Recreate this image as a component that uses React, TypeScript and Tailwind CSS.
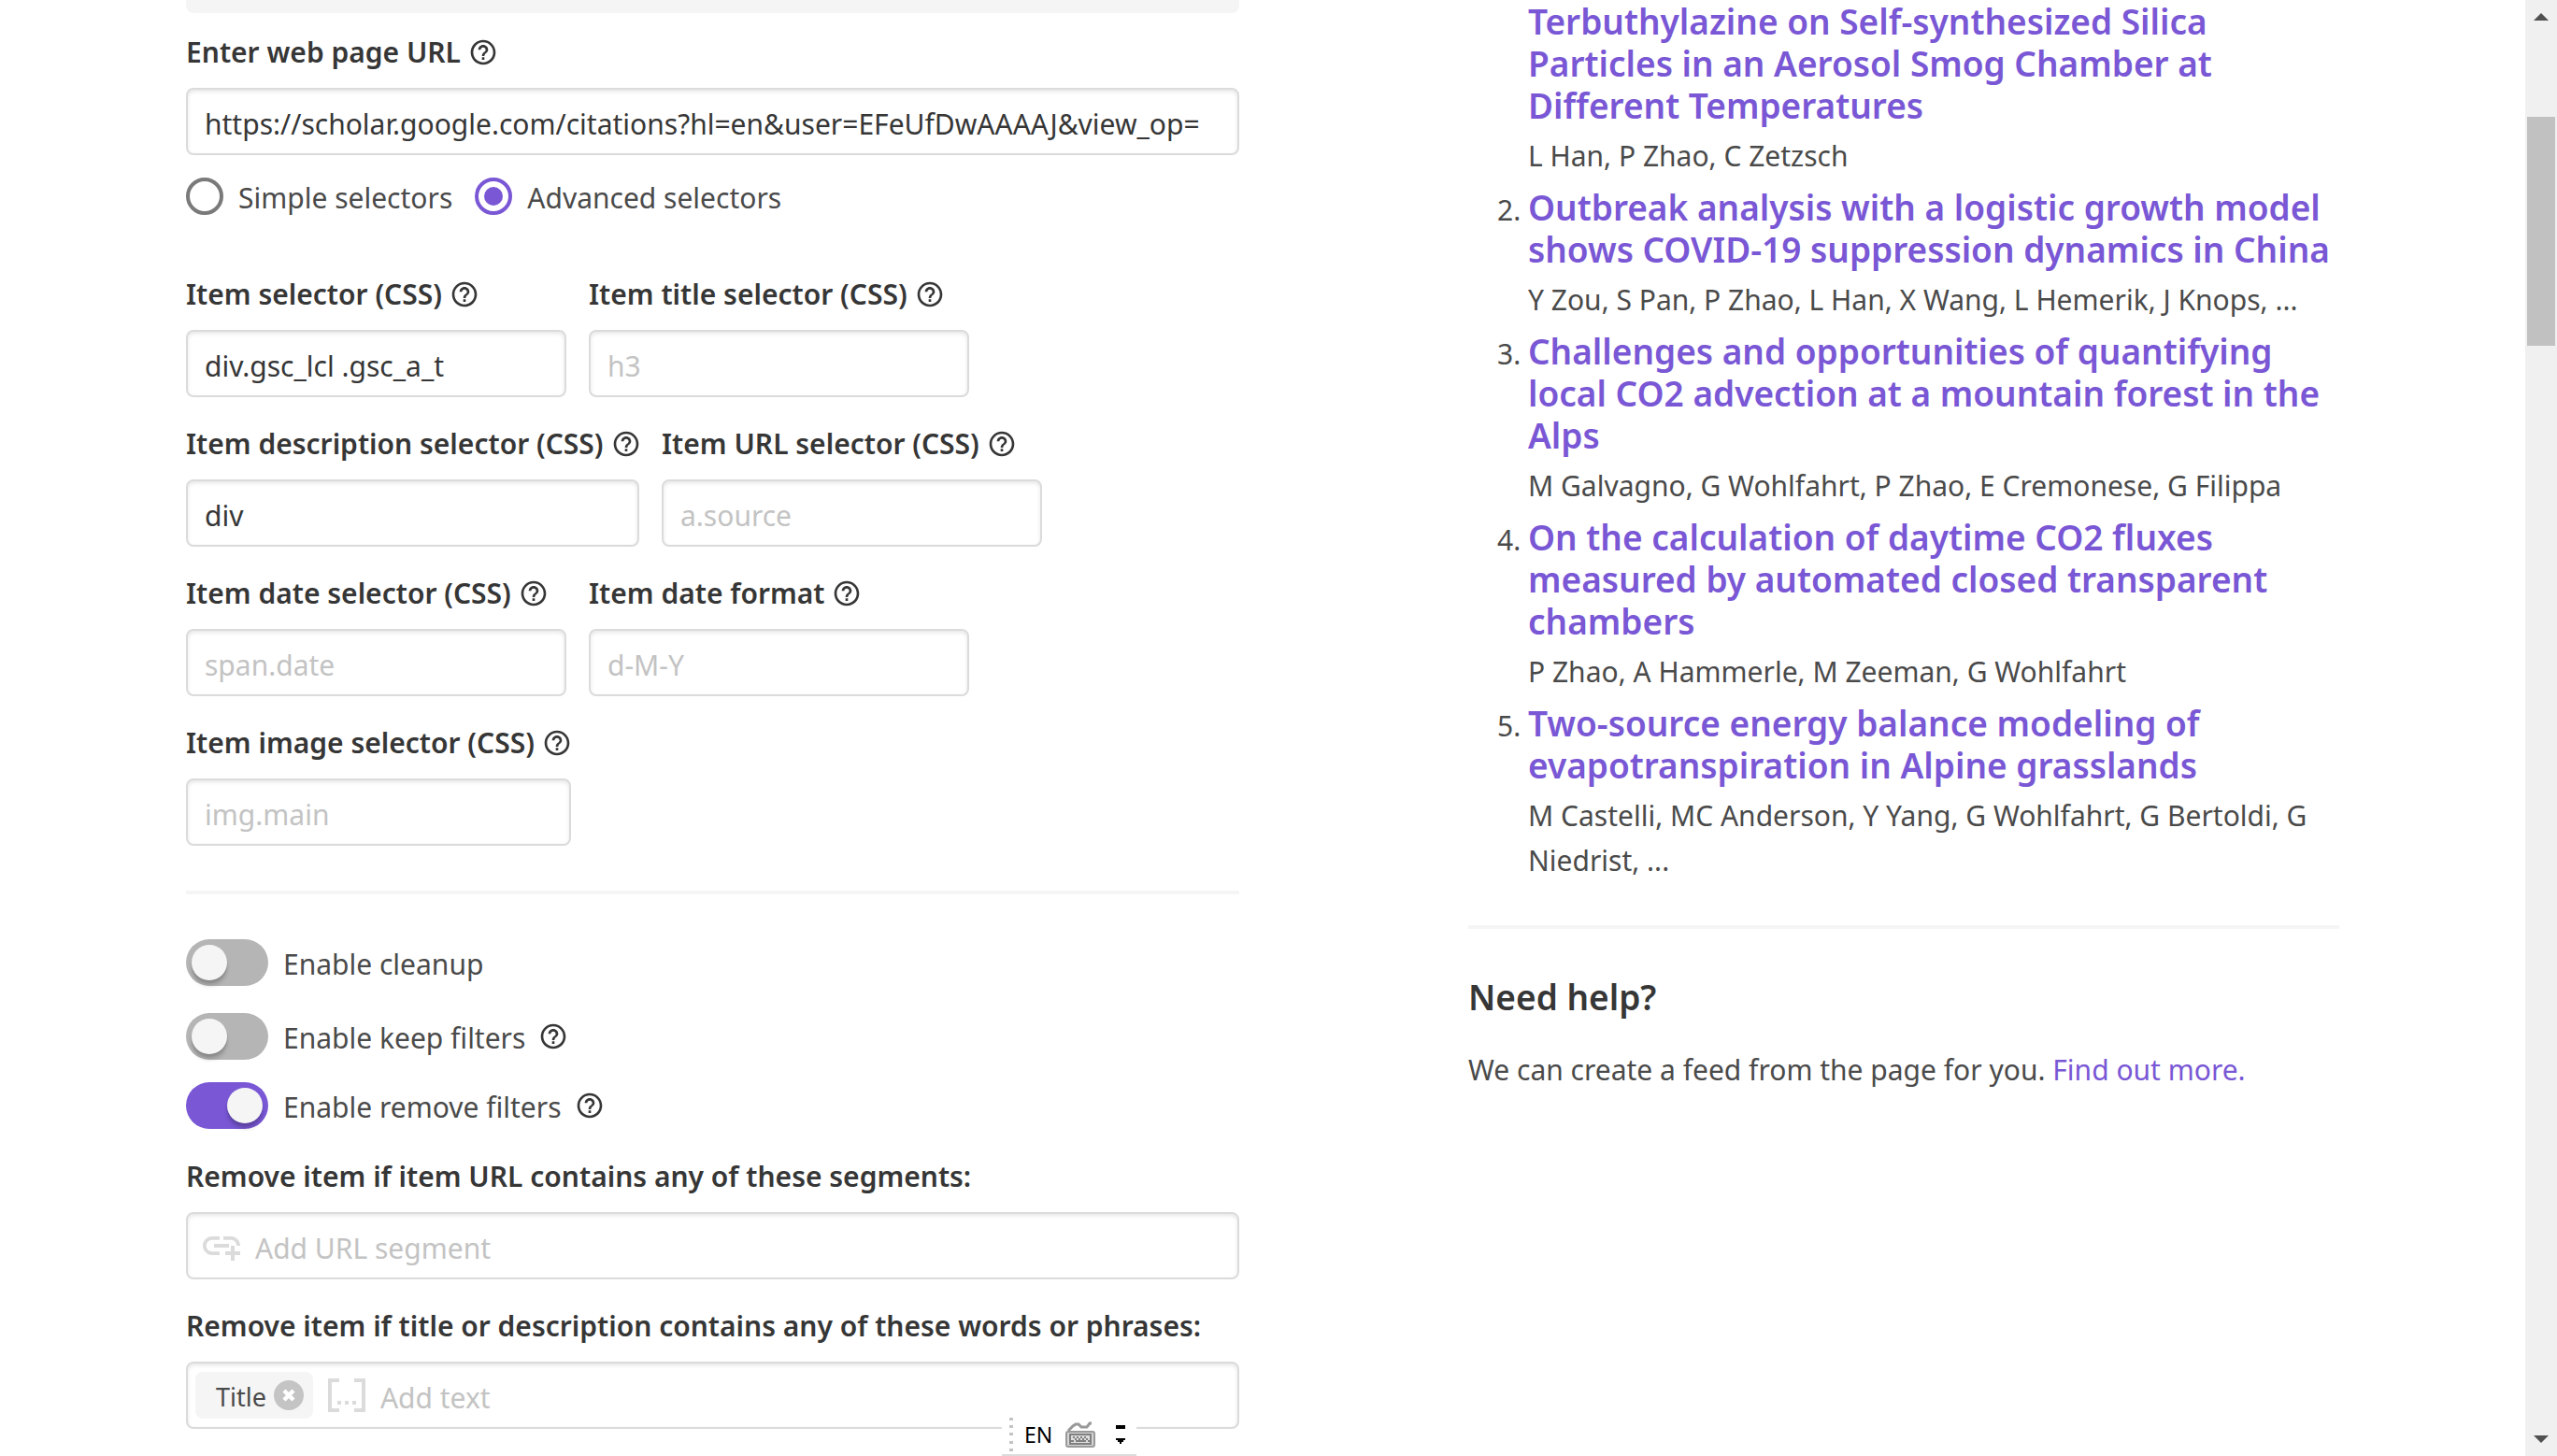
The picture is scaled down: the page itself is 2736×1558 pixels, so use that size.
import React, { useId } from "react";
import { MdHelpOutline } from "react-icons/md";

function Help({ about }: { about: string }) {
  return (
    <button type="button" aria-label={`Help: ${about}`} className="shrink-0 text-[#363636]">
      <MdHelpOutline className="size-8" />
    </button>
  );
}

const inputBox =
  "h-[72px] w-full rounded-lg border-2 border-[#dbdbdb] bg-white shadow-[inset_0_2px_4px_rgba(10,10,10,0.1)]";

type FieldProps = {
  label: string;
  value?: string;
  placeholder?: string;
  width?: string;
};

function Field({ label, value, placeholder, width = "w-full" }: FieldProps) {
  const id = useId();
  return (
    <div className={`flex flex-col gap-4 ${width}`}>
      <div className="flex h-11 items-center gap-2 whitespace-nowrap font-semibold text-[#363636]">
        <label htmlFor={id}>{label}</label>
        <Help about={label} />
      </div>
      <input
        id={id}
        type="text"
        defaultValue={value}
        placeholder={placeholder}
        className={`${inputBox} px-[18px] pt-1 text-[#363636] placeholder:text-[#c3c3c3]`}
      />
    </div>
  );
}

function Radio({ label, checked }: { label: string; checked?: boolean }) {
  return (
    <label className="flex items-center gap-4">
      <input
        type="radio"
        name="mode"
        defaultChecked={checked}
        className="flex size-10 appearance-none items-center justify-center rounded-full border-4 border-[#7a7a7a] before:size-5 before:rounded-full checked:border-[#7957d5] checked:before:bg-[#7957d5]"
      />
      <span className="pt-1">{label}</span>
    </label>
  );
}

function Switch({ label, checked, help }: { label: string; checked?: boolean; help?: boolean }) {
  return (
    <div className="flex h-[50px] items-center gap-3.5">
      <label className="flex items-center gap-4">
        <input
          type="checkbox"
          role="switch"
          defaultChecked={checked}
          className="flex h-[50px] w-[88px] appearance-none items-center rounded-full bg-[#b5b5b5] px-1.5 before:size-[38px] before:rounded-full before:bg-[#f5f5f5] before:shadow-[0_6px_4px_rgba(0,0,0,0.15),0_3px_2px_rgba(0,0,0,0.1)] checked:justify-end checked:bg-[#7957d5]"
        />
        <span className="pt-1">{label}</span>
      </label>
      {help && <Help about={label} />}
    </div>
  );
}

function AddLinkIcon() {
  return (
    <svg viewBox="0 0 24 24" className="mx-1 size-12 shrink-0 fill-[#dbdbdb]" aria-hidden="true">
      <path d="M8 11h8v2H8zM20.1 12H22c0-2.76-2.24-5-5-5h-4v1.9h4c1.71 0 3.1 1.39 3.1 3.1zM3.9 12c0-1.71 1.39-3.1 3.1-3.1h4V7H7c-2.76 0-5 2.24-5 5s2.24 5 5 5h4v-1.9H7c-1.71 0-3.1-1.39-3.1-3.1zM19 12h-2v3h-3v2h3v3h2v-3h3v-2h-3z" />
    </svg>
  );
}

function BracketsIcon() {
  return (
    <svg viewBox="0 0 48 48" className="mx-1 size-12 shrink-0 fill-[#dbdbdb]" aria-hidden="true">
      <path d="M4 6h12v4H8v28h8v4H4zM44 6H32v4h8v28h-8v4h12zM14 30h4v4h-4zM22 30h4v4h-4zM30 30h4v4h-4z" />
    </svg>
  );
}

type TagFieldProps = {
  label: string;
  placeholder: string;
  icon: React.ReactNode;
  tags?: string[];
};

function TagField({ label, placeholder, icon, tags = [] }: TagFieldProps) {
  const id = useId();
  return (
    <div className="flex flex-col gap-4">
      <label htmlFor={id} className="flex h-11 items-center whitespace-nowrap font-semibold text-[#363636]">
        {label}
      </label>
      <div className={`${inputBox} flex items-center gap-2 px-2`}>
        {tags.map((tag) => (
          <span
            key={tag}
            className="flex h-[50px] items-center gap-2 rounded-lg bg-[#f5f5f5] pr-2.5 pl-[22px] text-[27px] text-[#4a4a4a]"
          >
            <span className="pt-1">{tag}</span>
            <button
              type="button"
              aria-label={`Remove ${tag}`}
              className="flex size-8 items-center justify-center rounded-full bg-[#c4c4c4]"
            >
              <svg viewBox="0 0 16 16" className="size-4 stroke-white" aria-hidden="true">
                <path d="M3 3l10 10M13 3L3 13" strokeWidth="4.5" fill="none" />
              </svg>
            </button>
          </span>
        ))}
        {icon}
        <input
          id={id}
          type="text"
          placeholder={placeholder}
          className="h-full min-w-0 flex-1 bg-transparent pt-1 text-[#363636] placeholder:text-[#c3c3c3]"
        />
      </div>
    </div>
  );
}

const articles = [
  {
    title: "Terbuthylazine on Self-synthesized Silica Particles in an Aerosol Smog Chamber at Different Temperatures",
    authors: "L Han, P Zhao, C Zetzsch",
  },
  {
    title: "Outbreak analysis with a logistic growth model shows COVID-19 suppression dynamics in China",
    authors: "Y Zou, S Pan, P Zhao, L Han, X Wang, L Hemerik, J Knops, ...",
  },
  {
    title: "Challenges and opportunities of quantifying local CO2 advection at a mountain forest in the Alps",
    authors: "M Galvagno, G Wohlfahrt, P Zhao, E Cremonese, G Filippa",
  },
  {
    title: "On the calculation of daytime CO2 fluxes measured by automated closed transparent chambers",
    authors: "P Zhao, A Hammerle, M Zeeman, G Wohlfahrt",
  },
  {
    title: "Two-source energy balance modeling of evapotranspiration in Alpine grasslands",
    authors: "M Castelli, MC Anderson, Y Yang, G Wohlfahrt, G Bertoldi, G Niedrist, ...",
  },
];

function FeedForm() {
  return (
    <form>
      <div className="h-3.5 rounded-b-lg bg-[#f5f5f5]" />
      <div className="mt-5">
        <Field
          label="Enter web page URL"
          value="https://scholar.google.com/citations?hl=en&user=EFeUfDwAAAAJ&view_op="
        />
      </div>
      <div className="mt-5 flex h-12 items-center gap-6">
        <Radio label="Simple selectors" />
        <Radio label="Advanced selectors" checked />
      </div>
      <div className="mt-[59px] flex flex-col gap-7">
        <div className="flex gap-6">
          <Field label="Item selector (CSS)" value="div.gsc_lcl .gsc_a_t" width="w-[407px]" />
          <Field label="Item title selector (CSS)" placeholder="h3" width="w-[407px]" />
        </div>
        <div className="flex gap-6">
          <Field label="Item description selector (CSS)" value="div" width="w-[485px]" />
          <Field label="Item URL selector (CSS)" placeholder="a.source" width="w-[407px]" />
        </div>
        <div className="flex gap-6">
          <Field label="Item date selector (CSS)" placeholder="span.date" width="w-[407px]" />
          <Field label="Item date format" placeholder="d-M-Y" width="w-[407px]" />
        </div>
        <Field label="Item image selector (CSS)" placeholder="img.main" width="w-[412px]" />
      </div>
      <hr className="my-12 h-1 border-0 bg-[#f5f5f5]" />
      <Switch label="Enable cleanup" />
      <div className="mt-[29px] flex flex-col gap-6">
        <Switch label="Enable keep filters" help />
        <Switch label="Enable remove filters" checked help />
      </div>
      <div className="mt-[29px] flex flex-col gap-7">
        <TagField
          label="Remove item if item URL contains any of these segments:"
          placeholder="Add URL segment"
          icon={<AddLinkIcon />}
        />
        <TagField
          label="Remove item if title or description contains any of these words or phrases:"
          placeholder="Add text"
          icon={<BracketsIcon />}
          tags={["Title"]}
        />
      </div>
    </form>
  );
}

function Preview() {
  return (
    <aside>
      <ol className="list-decimal pl-16">
        {articles.map((article, i) => (
          <li key={article.title} className={i === 0 ? "list-none" : ""}>
            <h3 className="text-[37px] leading-[45px] font-semibold">
              <a href="#" className="text-[#7957d5]">
                {article.title}
              </a>
            </h3>
            <p className="my-2">{article.authors}</p>
          </li>
        ))}
      </ol>
      <hr className="mt-[45px] h-1 border-0 bg-[#f5f5f5]" />
      <h2 className="mt-[50px] text-[37px] leading-[45px] font-semibold text-[#363636]">Need help?</h2>
      <p className="mt-8">
        We can create a feed from the page for you.{" "}
        <a href="#" className="text-[#7957d5]">
          Find out more.
        </a>
      </p>
    </aside>
  );
}

function ScrollBar() {
  return (
    <div className="flex w-[34px] shrink-0 flex-col items-center bg-[#f0f0f0]" aria-hidden="true">
      <svg viewBox="0 0 16 8" className="mt-3.5 h-2 w-4 fill-[#505050]">
        <path d="M0 8L8 0l8 8z" />
      </svg>
      <div className="mt-[103px] h-[245px] w-[30px] bg-[#c1c1c1]" />
      <svg viewBox="0 0 16 8" className="mt-auto mb-3.5 h-2 w-4 fill-[#505050]">
        <path d="M0 0h16L8 8z" />
      </svg>
    </div>
  );
}

function LanguageBar() {
  return (
    <div className="absolute bottom-0 left-[1072px] flex h-[46px] w-36 items-center border-b-2 border-[#dbdbdb] bg-white pt-0.5 text-black">
      <svg viewBox="0 0 4 44" className="ml-2 h-11 w-1 fill-[#c4c4c4]" aria-hidden="true">
        <path d="M0 4h4v3H0zM0 12h4v3H0zM0 20h4v3H0zM0 29h4v3H0zM0 37h4v3H0z" />
      </svg>
      <span className="ml-3 text-[23px]">EN</span>
      <svg viewBox="0 0 32 28" className="ml-3.5 h-7 w-8" aria-hidden="true">
        <path d="M3 10l5-5 3-2h3l3 3h6l3-4h2" fill="none" stroke="#999999" strokeWidth="3" />
        <rect x="1" y="11" width="30" height="16" rx="2" fill="#d6d6d6" stroke="#999999" strokeWidth="2" />
        <rect x="5" y="14" width="22" height="10" fill="#dedede" stroke="#808080" strokeWidth="2" />
        <path
          d="M8 16h2v2H8zM12 16h2v2h-2zM16 16h2v2h-2zM20 16h2v2h-2zM10 18h2v2h-2zM14 18h2v2h-2zM18 18h2v2h-2zM22 18h2v2h-2zM6 20h3v2H6zM11 20h11v2H11zM24 20h2v2h-2z"
          fill="#808080"
        />
      </svg>
      <svg viewBox="0 0 10 20" className="ml-[22px] h-5 w-2.5 fill-black" aria-hidden="true">
        <path d="M0 0h10v4H0zM0 14h10v2H8v2H6v2H4v-2H2v-2H0z" />
      </svg>
    </div>
  );
}

export default function App() {
  return (
    <div className="relative flex h-screen overflow-hidden bg-white font-['Noto_Sans',sans-serif] text-[30px] leading-[48px] text-[#4a4a4a]">
      <main className="min-w-0 flex-1">
        <div className="mx-auto grid max-w-[2304px] grid-cols-[1127fr_932fr] gap-[245px]">
          <FeedForm />
          <Preview />
        </div>
      </main>
      <ScrollBar />
      <LanguageBar />
    </div>
  );
}
